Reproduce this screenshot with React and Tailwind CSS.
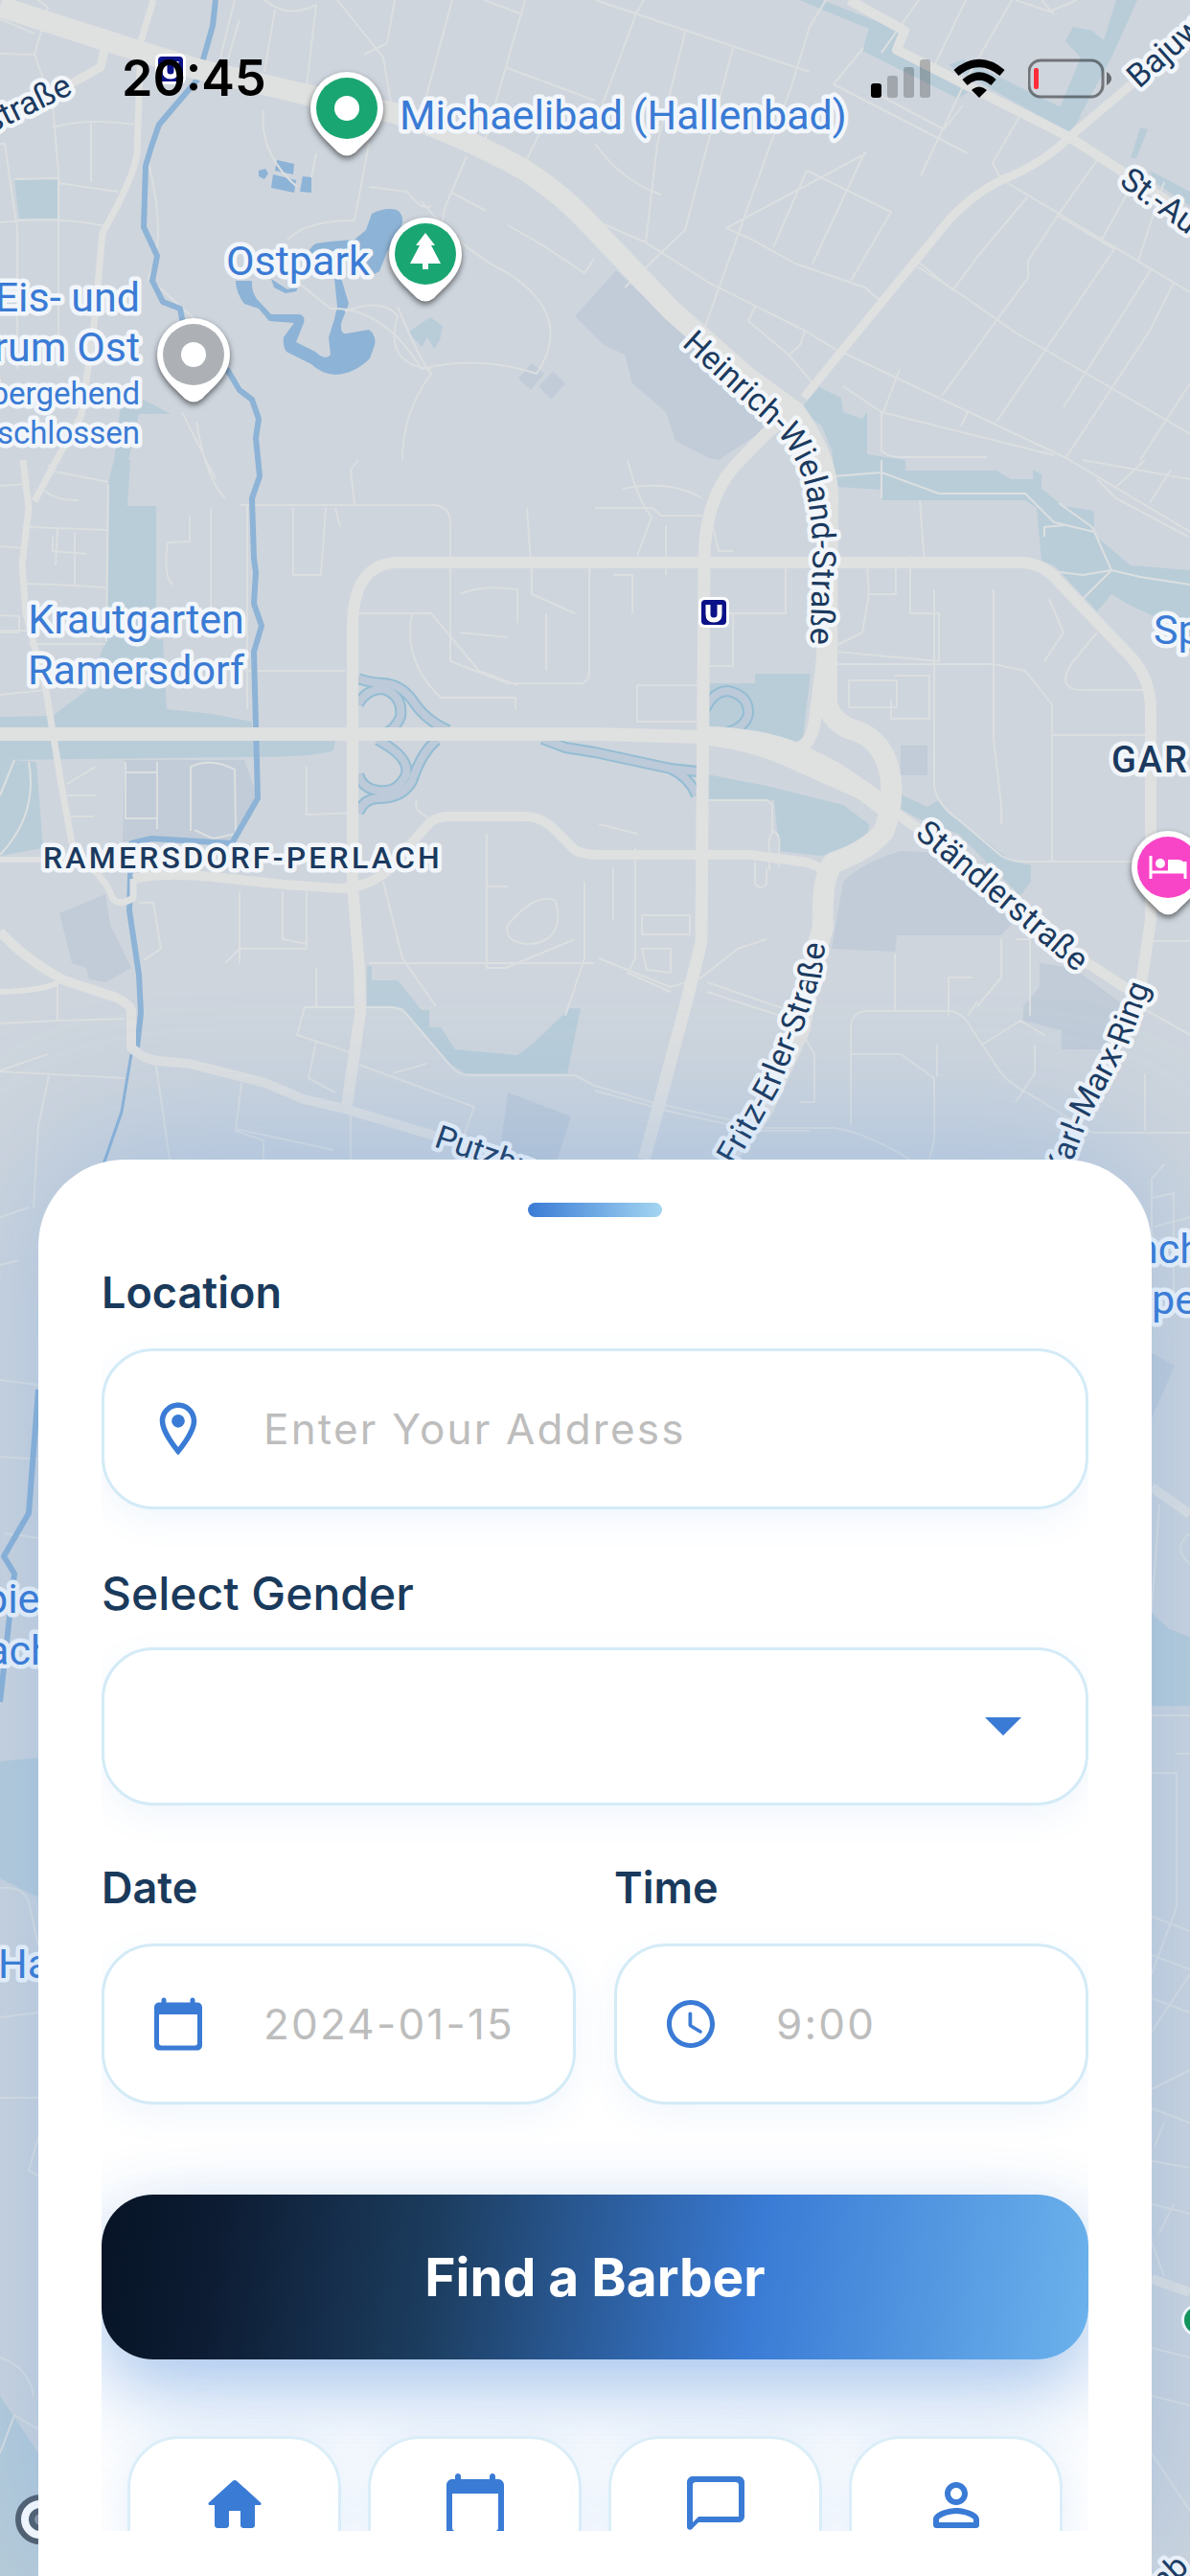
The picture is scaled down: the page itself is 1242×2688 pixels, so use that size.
import React, { useState } from "react";

const parks = [
  "M119 480H136L133 528H163V667H170L174 740L222 745L263 753V763H0V748L55 747L91 720L111 667L113 503Z",
  "M0 772H350L348 783Q330 790 263 790L0 793Z",
  "M0 792L38 795L45 885L0 893Z",
  "M127 415L150 417L178 432H145L134 480H119Z",
  "M15 187H60V228H20Z",
  "M835 0H858L940 32L935 55L1010 96L1000 103L900 53L907 30L858 10Z",
  "M1005 62L1128 122L1116 138L990 68Z",
  "M1120 28L1140 32L1152 42L1165 0H1187L1160 60L1125 125L1105 115L1128 60L1112 43Z",
  "M1180 165L1190 133L1198 135L1186 165Z",
  "M1200 178L1242 200V215L1205 190Z",
  "M426 347L449 331L462 340L459 355L453 364L446 352L440 362Z",
  "M835 427L855 404L878 415L880 430L900 437L905 430V474L945 480V491H1040L1055 500H1078V490L1087 495V510L1110 528L1142 533V558L1180 590L1242 595V680L1220 650L1180 632L1160 620L1145 638L1100 590L1087 585L1082 530L1070 522H920V511L873 508L868 470L858 445Z",
  "M738 713H788V703H846L838 770L825 777L780 763L738 760Z",
  "M738 808L800 820L880 840L907 860L905 875L880 890L855 893L813 888L808 835H738Z",
  "M938 828L968 842L980 835L994 850L1055 898L1076 903V920L1065 935L1000 870L960 855L938 843Z",
  "M383 1008H388V1023H415L440 1054H448V1072H460L475 1095L540 1101L555 1090L595 1052H606L592 1120H485L470 1110L420 1052L383 1050Z",
  "M0 1838L40 1834V1980L0 1960Z",
  "M1202 1683L1220 1700L1242 1708V1780H1202Z",
  "M0 2500L40 2560V2688H0Z",
];

const blocks = [
  "M600 330L643 282L690 327L815 437L780 460L750 480L740 478L705 460L695 430L660 400L652 370L630 360Z",
  "M541 395L555 379L568 390L554 407Z",
  "M562 403L577 388L590 400L575 417Z",
  "M130 793H255L268 830L240 878H128Z",
  "M880 920Q900 900 940 888L985 890L1060 960L1045 976H936L934 993L868 990Z",
  "M940 778H968V809H940Z",
  "M62 953L110 933L115 965L137 1010L110 1025L93 1022L90 1010L75 1005Z",
  "M530 1140L596 1165L580 1215H520Z",
  "M1085 1005L1120 1010L1175 1050L1150 1095H1108V1075L1068 1065V1050L1085 1030Z",
  "M1202 1412L1226 1425L1202 1480Z",
];

const water = [
  "M388 223Q402 216 414 219Q421 223 420 232L416 245L404 263L396 283L384 290L374 262H345L322 270Q320 260 330 254L345 252L370 250L382 240Z",
  "M246 293L263 293Q262 303 268 312L283 328L313 328Q319 330 317 337L309 357L329 367Q340 377 345 370L343 352L349 333L352 320L349 290H356L364 317L356 337Q355 350 362 348L385 344Q393 350 391 360L386 374Q370 390 350 391Q335 390 325 380L299 367Q295 362 296 352L307 337L281 335L270 322L255 317Q246 305 246 293Z",
  "M283 291L300 302L312 298L309 304L298 306L286 300Z",
  "M289 167L307 171L306 182L287 178Z",
  "M285 182L309 188L307 201L283 196Z",
  "M316 184L325 185V201L313 200Z",
  "M270 178L277 176L280 181L276 187L270 184Z",
];

const river =
  "M225 0L222 27L206 83L166 130L158 153L152 173L150 237L164 267L159 293L170 315L188 322L190 333L214 370L238 387L250 407L263 417L270 437L267 457L271 497L263 520L265 583L267 597L265 630L273 653L265 680L267 757L269 833L242 880L158 875L137 880L135 950L145 1017L147 1057L143 1093";

const ramps = [
  "M374 708Q384 712 400 713Q418 714 430 730Q444 752 468 762",
  "M374 735Q382 719 400 719Q421 726 418 748Q412 762 400 766",
  "M394 772Q428 790 424 808Q415 828 395 825Q378 823 374 808",
  "M456 772Q440 785 430 815Q420 833 395 833Q380 833 374 848",
  "M736 740Q745 721 760 721Q782 726 781 745Q778 760 756 765",
  "M566 771L590 780L621 785L700 802L727 805",
  "M700 802Q720 812 727 830",
];

const majorRoads = [
  { w: 22, d: "M0 7L119 45L206 72L329 101L412 118Q480 140 547 177Q590 205 621 240L700 323L779 393L830 430Q865 480 864 520L863 700V735Q870 757 895 763Q925 775 930 815Q932 845 922 868Q905 888 870 900Q857 915 859 967L847 1010L835 1073L795 1160L756 1210" },
  { w: 14, d: "M0 766H621L732 769" },
  { w: 14, d: "M732 770Q780 775 820 792L898 827L922 845M732 765Q795 765 839 785L874 803L918 833" },
  { w: 13, d: "M863 640L857 700L850 755Q845 780 829 783" },
  { w: 11, d: "M930 845L962 867L1132 1003L1183 1036" },
  { w: 12, d: "M368 925V650Q370 587 416 587H1066Q1090 588 1105 607L1175 680Q1201 705 1201 740V960L1191 1027L1152 1113L1104 1210" },
  { w: 12, d: "M368 925L375 1010L376 1057L362 1153" },
  { w: 13, d: "M835 423L799 453L768 485Q735 520 735 587L732 983L716 1047L684 1167L672 1210" },
  { w: 10, d: "M139 917Q170 910 222 915L297 923L355 927Q385 926 405 908L447 860Q455 852 467 852H550Q562 852 575 862L600 887Q608 892 630 892H783L843 900L859 907" },
  { w: 7, d: "M160 0L147 43L143 160Q140 185 107 243L98 340L85 433L59 480L36 523M24 480L30 530L23 590L27 640L48 720L63 813L75 880L111 923L118 938Q125 946 139 937V917" },
  { w: 9, d: "M111 43L105 70L70 90L0 115" },
  { w: 10, d: "M0 972Q25 1000 67 1023L119 1040Q137 1048 137 1055V1093Q150 1106 166 1107L198 1110L277 1130L317 1147L360 1157L470 1190" },
  { w: 6, d: "M0 1035Q40 1034 60 1026M0 897H78" },
  { w: 10, d: "M886 0L944 32L936 52L1116 143L1242 225" },
  { w: 9, d: "M1242 35L1175 93L1116 143Q1090 170 1045 188Q1015 203 990 230L878 367L839 415" },
  { w: 10, d: "M1202 1552L1242 1580M1202 2378L1242 2392" },
];

// side streets, drawn in one thin stroke
const minorRoads = [
  "M621 0L845 75M672 0L664 14L621 130M716 30L686 150L674 253M765 50L715 240L652 300M862 0L845 28L826 90L735 343M959 0L920 55M901 50L870 88L1010 160M910 95L985 135L1005 110M961 183L1010 80L1056 0M1008 0L972 75M1087 0L1100 15M1124 0L1095 12L1060 0M1065 120L1036 170L1045 187",
  "M1050 190L1242 305M1072 206L1020 268L995 302M1145 167L1104 225L1073 272V290M995 303L958 273M1073 290L1041 333L983 413M1104 225L1163 260L1152 252M1163 260L1040 440M1202 280L1110 425M1225 295L1200 345L1112 478M1242 400L1190 480",
  "M878 367L1113 478L1242 555M957 278L1000 305L1060 347L1155 402L1242 453M939 385L922 430M1010 430L1003 445M1183 190L1150 250M1215 190L1188 272",
  "M621 230L674 253L740 295L840 345L878 368M758 238L785 250L830 275L903 300L920 315M842 178L807 258M842 178L930 221L888 293M903 158L848 275M788 320L781 335L823 370L850 402M840 345L835 360L823 371M758 238L904 160",
  "M621 150Q650 190 690 203M880 403L920 430L1100 475M920 430V470Q925 477 940 477H1030",
  "M0 20L36 35M40 0L50 8L36 57L55 110L61 180V385M55 133Q90 123 140 130M95 126V190M15 187L60 186M0 150H5L18 240V385M61 191L123 200M0 232Q60 225 110 236M0 56L36 57M245 0L230 60M250 20L237 65M287 10L276 75M276 0Q300 20 330 5L320 90M352 0L400 60L410 118M412 0L404 45L380 57M472 0L445 100M548 0L505 150M505 0L545 15M527 70L621 105M565 135L548 170M487 163L465 215L455 260M470 200L507 220M530 235L565 255L610 285L620 270",
  "M155 170Q175 250 155 290L200 330L270 430M275 115Q270 160 310 195M330 160L325 185M440 210Q480 260 530 285Q600 330 560 390Q500 370 440 385Q400 320 345 322L280 270M385 195L425 200Q440 220 450 215M300 250Q320 230 370 230L385 150M415 320Q440 380 450 390Q420 430 420 480M360 325Q400 310 415 330Q400 380 450 385M205 440Q215 500 235 520M190 430Q210 470 225 500M250 527H455Q470 530 470 545V690L530 713H608Q615 710 615 700V590M370 527L366 490L374 480M258 527V740M220 530V640M198 538V565L175 566Q170 600 180 610M306 530V600H335L340 530M350 530L355 550",
  "M0 507L28 505M30 550L111 553M113 503L57 492L50 485M46 512Q60 523 82 522M55 560V575L90 578M60 552L58 590M0 570L25 572M27 609L60 610L110 613M0 642L20 643V660H0M30 672H110M0 725L48 720M0 658H28M78 555V610M113 505L111 670M370 640H450L500 700L540 715M430 640Q420 690 460 728H538V740M480 620Q500 610 540 615V650M570 640V700M480 660L530 665M550 530L555 600M555 590V620L600 640",
  "M0 830L15 793M30 795Q40 850 0 892M131 795V855M164 795V865M199 867V800Q220 790 245 803L246 870L222 875L203 866M131 806H164M131 854H164M100 800L70 818M100 830H70M98 852H70M255 700H360M320 800V850L370 848M435 835Q430 845 450 855M145 942H160L168 990L150 1002M50 1100L0 1117M0 1118L130 1125M51 1122L40 1175L35 1260M60 1025V1065L0 1068M60 1065L130 1063M163 1112L177 1210M252 1130L246 1180L275 1190V1210M246 1178L348 1200M366 1157V1210M375 1111L495 1155L475 1210M318 1051L310 1080L365 1098M318 1051H410Q420 1052 426 1060L470 1112Q478 1122 490 1122H600L621 1133M410 1120L445 1110M330 1087L322 1125L350 1140M250 930V1005M250 990H320V930M295 930V980L320 985M508 870V1010H528L600 980M508 925H530M330 1010V1050M250 990L235 1005M385 1005H620M400 920L420 1000L455 1050M530 965Q560 930 580 940Q590 980 555 985Q525 985 530 965M610 920V1000L590 1060",
  "M621 530L681 530L690 538H733M655 480Q665 520 680 540L665 580M744 550L750 575H765M733 635H745L760 640H820V590L830 590M765 640V695H733M650 510Q700 500 733 520M695 548V600M640 600H660V640M873 590H905L907 620L900 660L870 675M873 680L980 690V640H950V580M905 620H935V580M975 615V820Q978 840 1000 855L1045 893Q1055 899 1066 899H1195M1037 615V770L1045 840V860M1098 767V900M1098 767H1195M1145 660L1120 690Q1100 720 1130 720H1195M1098 767V735L1070 700L1037 693H870M1095 625L1110 660L1090 690M886 710H936V738H886ZM933 705H970V750H930V730M665 715H730V753H665ZM960 522L965 590M920 480V520M870 497L920 493L980 515L1070 515L1100 545L1142 555",
  "M665 870L625 860M640 905V960M663 885V1000L655 1015L700 1035M625 1000L700 1030L732 1020L770 990L800 980M670 990H700V1015L675 1012ZM670 955H720V975H670ZM738 1025L840 1060M738 1035L830 1065M621 1133L680 1150L800 1177H870Q900 1180 950 1210M621 1138L700 1160L790 1180H845M888 1175V1070Q890 1055 905 1055H990Q1005 1055 1015 1075L1045 1120Q1055 1132 1080 1145L1140 1182H1242M934 995V1055M990 1060V1020H1015M888 1100H940L975 1125V1190L970 1210M1045 980V1020L1020 1050M1060 980H1075V1060M1025 1090L1065 1065L1090 1080M1010 1060L1020 1045M1192 982H1242M1180 1045L1242 1080M1195 1120V1180M1080 1090V1120L1060 1150M978 1090V1123M830 1065L850 1100V1150H835M736 835H800L806 840V868M803 908V890Q801 870 808 868Q815 870 813 890V905M788 900V922Q795 930 800 922V905",
  "M1242 500L1130 480M1240 560L1165 520L1145 500M1195 480L1163 510M1222 490L1200 525M1090 560V550L1110 548M1090 595L1130 600L1160 595L1190 602L1242 610M1105 525L1140 550L1160 595L1130 625",
  "M0 1270L30 1260M0 1320L20 1315M0 1440L40 1445M0 1520L40 1523M5 1600L40 1605M0 1970Q25 1968 30 1985L40 2030M0 2105L40 2100M0 2189H40M40 2230L30 2265L40 2270M0 2460Q30 2470 35 2500M0 2560L15 2520L40 2535",
  "M1202 1315V1230L1215 1215M1202 1250L1225 1245V1350M1242 1270L1205 1280M1210 1570L1202 1680M1242 1600Q1222 1615 1242 1632M1202 1790H1242M1202 1850H1228V1950M1228 1830H1242M1202 2000L1242 2015M1202 2060L1228 1990V1880M1202 2120L1242 2060M1202 2040L1242 2055M1202 2085L1242 2100M1202 2180L1242 2160M1202 2200L1242 2215M1202 2255L1242 2262M1202 2300L1242 2310M1215 2215L1205 2240M1210 2330L1225 2300M1202 2340L1215 2375M1202 2450L1242 2460M1202 2560L1242 2620M1202 2500L1242 2510",
];

const halo = {
  stroke: "#f2f6fa",
  strokeWidth: 9,
  strokeLinejoin: "round",
  paintOrder: "stroke",
};

function MapPin({ x, y, color, children }) {
  return (
    <g transform={`translate(${x} ${y})`}>
      <path
        d="M0 -38A38 38 0 0 1 38 0C38 22 20 34 9 46Q0 53 -9 46C-20 34 -38 22 -38 0A38 38 0 0 1 0 -38Z"
        fill="white"
        className="drop-shadow-[0_3px_3px_rgba(0,0,0,0.55)]"
      />
      <circle r="32" fill={color} />
      {children}
    </g>
  );
}

function SubwaySign({ x, y }) {
  return (
    <g transform={`translate(${x} ${y})`}>
      <rect x="-16" y="-16" width="32" height="32" rx="6" fill="white" />
      <rect x="-13" y="-13" width="26" height="26" rx="4" fill="#0b1187" />
      <path d="M-6 -8V2Q-6 8 0 8Q6 8 6 2V-8" fill="none" stroke="white" strokeWidth="5" />
    </g>
  );
}

function CityMap() {
  return (
    <svg
      className="absolute inset-0 h-full w-full font-[Roboto,sans-serif]"
      viewBox="0 0 1242 2688"
      preserveAspectRatio="xMidYMin slice"
      role="img"
      aria-label="Map"
    >
      <rect width="1242" height="2688" fill="#ced5dd" />
      {blocks.map((d) => (
        <path key={d} d={d} fill="#c1ccd8" />
      ))}
      {parks.map((d) => (
        <path key={d} d={d} fill="#b9cdd9" />
      ))}
      {water.map((d) => (
        <path key={d} d={d} fill="#8db3d6" />
      ))}
      <g fill="none" strokeLinejoin="round">
        {minorRoads.map((d) => (
          <path key={d} d={d} stroke="#dcdfe0" strokeWidth="2" />
        ))}
        <path d={river} stroke="#8db3d6" strokeWidth="6" />
        <path d="M137 1100L127 1160L108 1215" stroke="#8db3d6" strokeWidth="3" />
        <path d="M40 1450L30 1579L4 1624L15 1642L0 1776" stroke="#8db3d6" strokeWidth="6" />
        {ramps.map((d) => (
          <path key={d} d={d} stroke="#93bdd3" strokeWidth="12" />
        ))}
        {ramps.map((d) => (
          <path key={d} d={d} stroke="#bccad9" strokeWidth="8" />
        ))}
        {majorRoads.map((road) => (
          <path key={road.d} d={road.d} stroke="#dfe0e0" strokeWidth={road.w} />
        ))}
      </g>

      <SubwaySign x={178} y={72} />
      <SubwaySign x={745} y={639} />

      {/* Street names */}
      <defs>
        <path id="heinrich" d="M711 360L800 441Q833 473 841 510Q849 550 848 590L845 700" />
        <path id="fritz" d="M742 1276L771 1210L811 1140L839 1070L858 1013L868 930" />
        <path id="karl" d="M1092 1272L1120 1210L1136 1167L1179 1087L1222 970" />
        <path id="standler" d="M954 872L1000 910L1130 1020" />
      </defs>
      <g fill="#1b3a5f" fontSize="34" {...halo}>
        <text>
          <textPath href="#heinrich">Heinrich-Wieland-Straße</textPath>
        </text>
        <text>
          <textPath href="#fritz" startOffset="64">Fritz-Erler-Straße</textPath>
        </text>
        <text>
          <textPath href="#karl" startOffset="44">Karl-Marx-Ring</textPath>
        </text>
        <text>
          <textPath href="#standler">Ständlerstraße</textPath>
        </text>
        <text textAnchor="end" transform="translate(77 97) rotate(-26)">
          straße
        </text>
        <text transform="translate(1189 93) rotate(-42)">Bajuw</text>
        <text transform="translate(1167 192) rotate(36)">St.-Au</text>
        <text transform="translate(452 1196) rotate(19)">Putzbrunner</text>
        <text transform="translate(1214 2706) rotate(-42)">nb</text>
      </g>
      <g fill="#1b3a5f" fontWeight="500" {...halo}>
        <text x="45" y="906" fontSize="32" className="tracking-widest">
          RAMERSDORF-PERLACH
        </text>
        <text x="1160" y="806" fontSize="38" className="tracking-wider">
          GAR
        </text>
      </g>

      {/* Places */}
      <g fill="#3a7bd5" fontSize="43" {...halo}>
        <text x="417" y="135">Michaelibad (Hallenbad)</text>
        <text x="236" y="287">Ostpark</text>
        <text x="146" y="325" textAnchor="end">Eis- und</text>
        <text x="146" y="377" textAnchor="end">rum Ost</text>
        <text x="146" y="422" textAnchor="end" fontSize="33">bergehend</text>
        <text x="146" y="463" textAnchor="end" fontSize="33">schlossen</text>
        <text x="142" y="661" textAnchor="middle">Krautgarten</text>
        <text x="142" y="714" textAnchor="middle">Ramersdorf</text>
        <text x="1204" y="672">Sp</text>
        <text x="1185" y="1318">nch</text>
        <text x="1202" y="1371">pe</text>
        <text x="-16" y="1683">pie</text>
        <text x="-14" y="1737">ach</text>
        <text x="-2" y="2064">Ha</text>
      </g>

      <MapPin x={362} y={113} color="#1aa672">
        <circle r="13" fill="white" />
      </MapPin>
      <MapPin x={444} y={265} color="#1aa672">
        <path d="M0 -22L10 -9H6L16 10H3V16H-3V10H-16L-6 -9H-10Z" fill="white" />
      </MapPin>
      <MapPin x={202} y={370} color="#adb1b5">
        <circle r="13" fill="white" />
      </MapPin>
      <MapPin x={1219} y={905} color="#f845c8">
        <path d="M-18 -12V12M-18 5H18M18 -6V12" stroke="white" strokeWidth="3" fill="none" />
        <circle cx="-8" cy="-4" r="5" fill="white" />
        <path d="M0 -8H10Q18 -8 18 0V5H0Z" fill="white" />
      </MapPin>

      <circle cx="1250" cy="2421" r="17" fill="white" />
      <circle cx="1250" cy="2421" r="14" fill="#0f9550" />
      <circle cx="42" cy="2629" r="23" fill="white" stroke="#525e6a" strokeWidth="6" />
      <circle cx="42" cy="2629" r="9" fill="#8b95a0" stroke="#525e6a" strokeWidth="6" />
    </svg>
  );
}

function StatusBar() {
  return (
    <header className="relative flex items-start justify-between pt-[50px] pr-[82px] pl-[127px]">
      <time className="text-[52px] leading-[64px] font-semibold text-black">20:45</time>
      <div className="flex items-center gap-6 pt-[11px]">
        <svg width="62" height="42" viewBox="0 0 62 42" aria-label="Signal">
          <rect y="26" width="11" height="15" rx="3" />
          <rect x="17" y="18" width="11" height="23" rx="3" opacity="0.22" />
          <rect x="34" y="9" width="11" height="32" rx="3" opacity="0.22" />
          <rect x="51" y="1" width="11" height="40" rx="3" opacity="0.22" />
        </svg>
        <svg width="54" height="42" viewBox="0 0 54 42" aria-label="Wi-Fi">
          <g fill="none" stroke="black" strokeWidth="8">
            <path d="M3 15Q27 -5 51 15" />
            <path d="M12 25Q27 12 42 25" />
          </g>
          <path d="M19 33Q27 26 35 33L27 41Z" />
        </svg>
        <svg width="87" height="42" viewBox="0 0 87 42" aria-label="Battery">
          <rect x="1" y="2" width="77" height="38" rx="12" fill="none" stroke="black" strokeOpacity="0.45" strokeWidth="3" />
          <rect x="6" y="10" width="5" height="22" rx="2" fill="#ff2d3b" />
          <path d="M82 14Q87 17 87 21Q87 25 82 28Z" fillOpacity="0.5" />
        </svg>
      </div>
    </header>
  );
}

const icons = {
  pin: "M12 2C8.13 2 5 5.13 5 9c0 5.25 7 13 7 13s7-7.75 7-13c0-3.87-3.13-7-7-7zM7 9c0-2.76 2.24-5 5-5s5 2.24 5 5c0 2.88-2.88 7.19-5 9.88C9.92 16.21 7 11.85 7 9zM12 6.5a2.5 2.5 0 1 0 0 5a2.5 2.5 0 0 0 0-5z",
  calendar:
    "M20 3h-1V2c0-.55-.45-1-1-1s-1 .45-1 1v1H7V2c0-.55-.45-1-1-1s-1 .45-1 1v1H4c-1.1 0-2 .9-2 2v16c0 1.1.9 2 2 2h16c1.1 0 2-.9 2-2V5c0-1.1-.9-2-2-2zm-1 18H5c-.55 0-1-.45-1-1V8h16v12c0 .55-.45 1-1 1z",
  clock:
    "M12 2C6.47 2 2 6.48 2 12s4.47 10 10 10s10-4.48 10-10S17.52 2 12 2zM12 20c-4.42 0-8-3.58-8-8s3.58-8 8-8 8 3.58 8 8-3.58 8-8 8zM11.78 7h-.06c-.4 0-.72.32-.72.72v4.72c0 .35.18.68.49.86l4.15 2.49c.34.2.78.1.98-.24.21-.34.1-.79-.25-.99l-3.87-2.3V7.72c0-.4-.32-.72-.72-.72z",
  home: "M10 19v-5h4v5c0 .55.45 1 1 1h3c.55 0 1-.45 1-1v-7h1.7c.46 0 .68-.57.33-.87L12.67 3.6c-.38-.34-.96-.34-1.34 0l-8.36 7.53c-.34.3-.13.87.33.87H5v7c0 .55.45 1 1 1h3c.55 0 1-.45 1-1z",
  chat: "M20 2H4c-1.1 0-2 .9-2 2v15.59c0 .89 1.08 1.34 1.71.71L6 18h14c1.1 0 2-.9 2-2V4c0-1.1-.9-2-2-2zm0 14H6l-2 2V5c0-.55.45-1 1-1h14c.55 0 1 .45 1 1v11z",
  person:
    "M12 6c1.1 0 2 .9 2 2s-.9 2-2 2-2-.9-2-2 .9-2 2-2m0 9c2.7 0 5.8 1.29 6 2v1H6v-.99c.2-.72 3.3-2.01 6-2.01m0-11C9.79 4 8 5.79 8 8s1.79 4 4 4 4-1.79 4-4-1.79-4-4-4zm0 9c-2.67 0-8 1.34-8 4v2c0 .55.45 1 1 1h14c.55 0 1-.45 1-1v-2c0-2.66-5.33-4-8-4z",
};

function Icon({ name, className }) {
  return (
    <svg viewBox="0 0 24 24" className={className} fill="#3a7bd5" fillRule="evenodd" aria-hidden="true">
      <path d={icons[name]} />
    </svg>
  );
}

function Field({ id, label, icon, iconClass, placeholder, value, onChange }) {
  return (
    <div className="flex min-w-0 flex-1 flex-col gap-8">
      <label htmlFor={id} className="text-[45px] leading-[52px] font-semibold">
        {label}
      </label>
      <div className="flex h-[168px] items-center rounded-[54px] border-3 border-[#d3ebf7] bg-white shadow-[0_12px_36px_rgba(58,123,213,0.07)]">
        <div className="flex w-[154px] shrink-0 justify-center">
          <Icon name={icon} className={iconClass} />
        </div>
        <input
          id={id}
          name={id}
          type="text"
          placeholder={placeholder}
          value={value}
          onChange={onChange}
          className="mx-3 h-full min-w-0 flex-1 bg-transparent text-[44px] tracking-wider outline-none placeholder:text-[#bdbdbd]"
        />
      </div>
    </div>
  );
}

const tabs = [
  { name: "home", label: "Home" },
  { name: "calendar", label: "Bookings" },
  { name: "chat", label: "Messages" },
  { name: "person", label: "Profile" },
];

const App = () => {
  const [form, setForm] = useState({
    location: "",
    gender: "",
    date: "",
    time: "",
  });

  const handleInputChange = (event) => {
    const { name, value } = event.target;
    setForm((prevForm) => ({ ...prevForm, [name]: value }));
  };

  return (
    <div className="relative flex min-h-screen flex-col overflow-hidden font-[Inter,sans-serif] text-[#1a3a5c]">
      <CityMap />
      <StatusBar />

      <main className="relative mx-10 mt-auto rounded-t-[90px] bg-white px-[66px] pt-[45px] pb-[47px] shadow-[0_-16px_150px_rgba(74,144,226,0.3)]">
        <div className="mx-auto h-[15px] w-[140px] rounded-full bg-linear-to-r from-[#3a7bd5] to-[#a4d5f0]" />

        <form onSubmit={(event) => event.preventDefault()} className="mt-[53px] overflow-hidden">
          <div className="flex">
            <Field
              id="location"
              label="Location"
              icon="pin"
              iconClass="size-[66px]"
              placeholder="Enter Your Address"
              value={form.location}
              onChange={handleInputChange}
            />
          </div>

          {/* Gender */}
          <div className="mt-[60px] flex flex-col gap-7">
            <label htmlFor="gender" className="text-[48px] leading-[56px] font-medium">
              Select Gender
            </label>
            <div className="relative h-[165px] rounded-[54px] border-3 border-[#d3ebf7] bg-white shadow-[0_12px_36px_rgba(58,123,213,0.07)]">
              <select
                id="gender"
                name="gender"
                value={form.gender}
                onChange={handleInputChange}
                className="h-full w-full appearance-none rounded-[54px] bg-transparent px-14 text-[44px] outline-none"
              >
                <option value=""></option>
                <option value="male">Male</option>
                <option value="female">Female</option>
              </select>
              <svg
                viewBox="0 0 38 19"
                className="pointer-events-none absolute inset-y-0 right-[67px] my-auto w-[38px]"
                fill="#3a7bd5"
                aria-hidden="true"
              >
                <path d="M0 0H38L19 19Z" />
              </svg>
            </div>
          </div>

          <div className="mt-[60px] flex gap-10">
            <Field
              id="date"
              label="Date"
              icon="calendar"
              iconClass="size-[60px]"
              placeholder="2024-01-15"
              value={form.date}
              onChange={handleInputChange}
            />
            <Field
              id="time"
              label="Time"
              icon="clock"
              iconClass="size-[60px]"
              placeholder="9:00"
              value={form.time}
              onChange={handleInputChange}
            />
          </div>

          <button
            type="submit"
            className="mt-[94px] h-[172px] w-full rounded-[54px] bg-[linear-gradient(98deg,#071426_0%,#0d1c33_12%,#1c3d5f_34%,#3a7bd5_66%,#6cb2ec_100%)] text-[55px] font-bold text-white shadow-[0_24px_72px_rgba(58,123,213,0.35),0_60px_120px_rgba(74,144,226,0.16)]"
          >
            Find a Barber
          </button>

          {/* Tab tiles run past the bottom of the scroll area */}
          <nav className="mt-20 flex h-[99px] gap-7 px-[27px]">
            {tabs.map((tab) => (
              <button
                key={tab.name}
                type="button"
                aria-label={tab.label}
                className="flex h-[180px] flex-1 justify-center rounded-[54px] border-3 border-[#dbeef8] bg-white pt-[33px] shadow-[0_12px_48px_rgba(74,144,226,0.14)]"
              >
                <Icon name={tab.name} className="size-[72px]" />
              </button>
            ))}
          </nav>
        </form>
      </main>
    </div>
  );
};

export default App;
